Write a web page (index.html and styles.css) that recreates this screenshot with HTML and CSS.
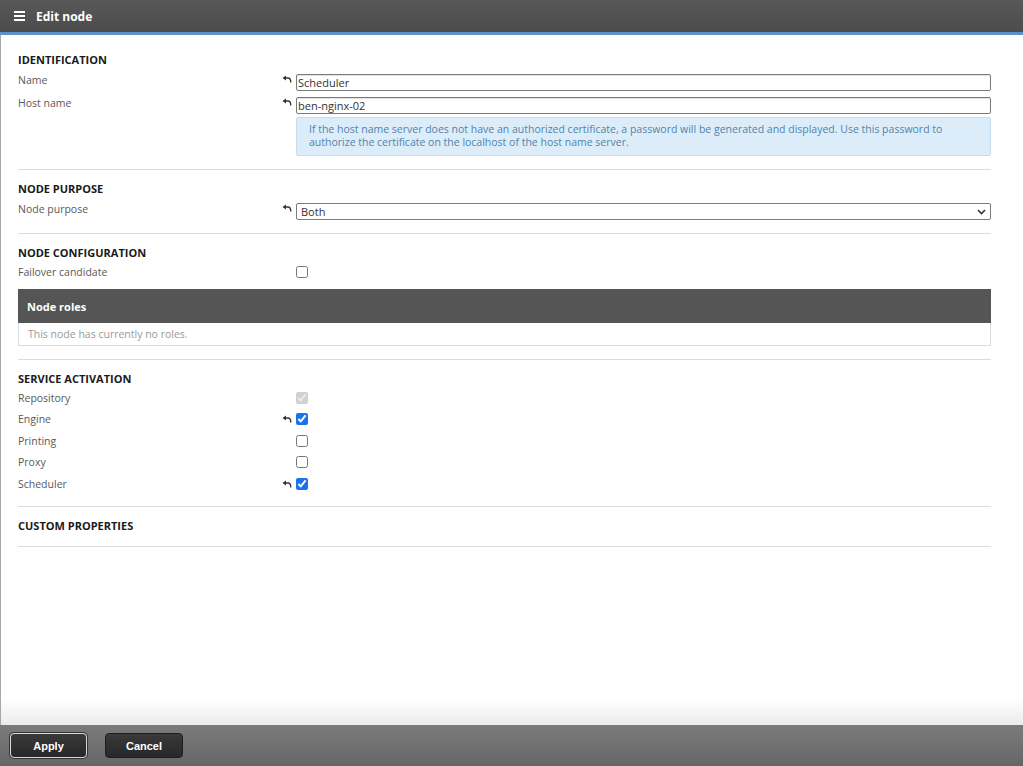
FILE: index.html
```html
<!DOCTYPE html>
<html lang="en">
<head>
  <meta charset="UTF-8">
  <title>Edit node</title>
  <link rel="stylesheet" href="styles.css">
</head>
<body>
  <div class="page">
    <header class="topbar">
      <span class="menu-icon"><i></i><i></i><i></i></span>
      <span class="topbar-title">Edit node</span>
    </header>

    <main class="editor">
      <section class="group group-first">
        <h2>Identification</h2>
        <div class="field">
          <label>Name</label>
          <span class="undo"><svg width="10" height="8" viewBox="0 0 10 8"><path d="M0.5 3 L4 0.5 V5.5 Z" fill="#333"/><path d="M3.5 3 H6 Q8.8 3 8.8 7.5" fill="none" stroke="#333" stroke-width="1.3"/></svg></span>
          <input class="text-input" type="text" value="Scheduler">
        </div>
        <div class="field">
          <label>Host name</label>
          <span class="undo"><svg width="10" height="8" viewBox="0 0 10 8"><path d="M0.5 3 L4 0.5 V5.5 Z" fill="#333"/><path d="M3.5 3 H6 Q8.8 3 8.8 7.5" fill="none" stroke="#333" stroke-width="1.3"/></svg></span>
          <input class="text-input" type="text" value="ben-nginx-02">
        </div>
        <div class="info-box">If the host name server does not have an authorized certificate, a password will be generated and displayed. Use this password to authorize the certificate on the localhost of the host name server.</div>
      </section>

      <section class="group">
        <h2>Node purpose</h2>
        <div class="field">
          <label>Node purpose</label>
          <span class="undo"><svg width="10" height="8" viewBox="0 0 10 8"><path d="M0.5 3 L4 0.5 V5.5 Z" fill="#333"/><path d="M3.5 3 H6 Q8.8 3 8.8 7.5" fill="none" stroke="#333" stroke-width="1.3"/></svg></span>
          <div class="select-box">
            <span>Both</span>
            <svg width="9" height="6" viewBox="0 0 9 6"><path d="M1 1 L4.5 4.5 L8 1" fill="none" stroke="#333" stroke-width="1.6"/></svg>
          </div>
        </div>
      </section>

      <section class="group group-config">
        <h2>Node configuration</h2>
        <div class="check-row">
          <label>Failover candidate</label>
          <span class="undo"></span>
          <input type="checkbox">
        </div>
        <div class="roles">
          <div class="roles-head">Node roles</div>
          <div class="roles-empty">This node has currently no roles.</div>
        </div>
      </section>

      <section class="group group-services">
        <h2>Service activation</h2>
        <div class="check-row">
          <label>Repository</label>
          <span class="undo"></span>
          <input type="checkbox" checked disabled>
        </div>
        <div class="check-row">
          <label>Engine</label>
          <span class="undo"><svg width="10" height="8" viewBox="0 0 10 8"><path d="M0.5 3 L4 0.5 V5.5 Z" fill="#333"/><path d="M3.5 3 H6 Q8.8 3 8.8 7.5" fill="none" stroke="#333" stroke-width="1.3"/></svg></span>
          <input type="checkbox" checked>
        </div>
        <div class="check-row">
          <label>Printing</label>
          <span class="undo"></span>
          <input type="checkbox">
        </div>
        <div class="check-row">
          <label>Proxy</label>
          <span class="undo"></span>
          <input type="checkbox">
        </div>
        <div class="check-row">
          <label>Scheduler</label>
          <span class="undo"><svg width="10" height="8" viewBox="0 0 10 8"><path d="M0.5 3 L4 0.5 V5.5 Z" fill="#333"/><path d="M3.5 3 H6 Q8.8 3 8.8 7.5" fill="none" stroke="#333" stroke-width="1.3"/></svg></span>
          <input type="checkbox" checked>
        </div>
      </section>

      <section class="group">
        <h2>Custom properties</h2>
      </section>
    </main>

    <footer class="actions">
      <button class="btn btn-focus">Apply</button>
      <button class="btn">Cancel</button>
    </footer>
  </div>
</body>
</html>
```

FILE: styles.css
```css
html, body { margin: 0; padding: 0; height: 100%; }
body { font-family: "Open Sans", Arial, sans-serif; font-size: 10.5px; color: #595959; background: #fff; }
.page { display: flex; flex-direction: column; height: 766px; }

.topbar { height: 32px; flex: none; display: flex; align-items: center; background: linear-gradient(#585858, #4c4c4c); border-bottom: 3px solid #5d92c9; }
.menu-icon { display: flex; flex-direction: column; gap: 2px; margin-left: 14px; width: 11px; }
.menu-icon i { display: block; height: 2px; background: #fff; }
.topbar-title { margin-left: 11px; color: #fff; font-weight: bold; font-size: 12px; }

.editor { flex: 1; padding: 0 32px 0 17px; border-left: 1px solid #a8a8a8; background: linear-gradient(#fff calc(100% - 26px), #ebebeb); }
.group { padding: 12px 0 13px; border-bottom: 1px solid #dcdcdc; }
.group-first { padding-top: 18px; padding-bottom: 13px; }
.group-services { padding-bottom: 11.5px; }
.group h2 { margin: 0; font-size: 11px; line-height: 14px; font-weight: bold; color: #1a1a1a; text-transform: uppercase; }

.field { display: grid; grid-template-columns: 260px 18px 1fr; align-items: center; height: 17px; margin-top: 7px; }
.field + .field { margin-top: 6px; }
.field label { align-self: start; line-height: 13px; }
.undo { display: flex; justify-content: flex-end; padding-right: 4px; margin-top: -7px; }
.text-input { height: 17px; box-sizing: border-box; border: 1px solid #7a7a7a; border-radius: 2px; padding: 0 1px; font: 11px "Open Sans", Arial, sans-serif; color: #333; box-shadow: inset 0 1px 1px rgba(0,0,0,0.12); outline: none; }
.select-box { height: 17px; box-sizing: border-box; border: 1px solid #7a7a7a; border-radius: 2px; padding: 0 4px; display: flex; align-items: center; justify-content: space-between; font-size: 11px; color: #333; }

.info-box { margin: 3px 0 0 278px; height: 39px; box-sizing: border-box; padding: 5px 12px; background: #dcedf9; border: 1px solid #c2ddf1; border-radius: 2px; color: #5183ad; font-size: 10.5px; line-height: 13px; }

.check-row { display: grid; grid-template-columns: 260px 18px 1fr; align-items: center; height: 21.5px; }
h2 + .check-row { margin-top: 1px; }
.check-row input { margin: 0; width: 12px; height: 12px; accent-color: #1a73e8; }
.check-row .undo { margin-top: 0; }

.roles { margin-top: 6.5px; border: 1px solid #dcdcdc; }
.roles-head { height: 34px; display: flex; align-items: center; padding-left: 9px; background: #555; color: #fff; font-weight: bold; font-size: 11px; margin: -1px -1px 0; }
.roles-empty { height: 22px; display: flex; align-items: center; padding-left: 9px; color: #9a9a9a; }

.actions { height: 41px; flex: none; display: flex; align-items: center; gap: 18px; padding-left: 10px; background: linear-gradient(#7b7b7b, #666); }
.btn { width: 78px; height: 25px; border-radius: 4px; border: 1px solid #1e1e1e; background: linear-gradient(#3a3a3a, #272727); color: #fff; font: bold 11px Arial, "Liberation Sans", sans-serif; }
.btn-focus { width: 77px; border: 1px solid #d8d8d8; box-shadow: 0 0 0 1px #333; }
```
